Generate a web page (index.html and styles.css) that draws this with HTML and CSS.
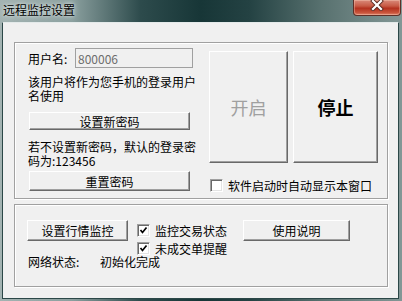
FILE: index.html
```html
<!DOCTYPE html>
<html lang="zh-CN">
<head>
  <meta charset="UTF-8">
  <title>远程监控设置</title>
  <link rel="stylesheet" href="styles.css">
</head>
<body>

  <div class="window">
    <div class="titlebar">
      <span class="title">远程监控设置</span>
      <div class="close">
        <svg width="16" height="11" viewBox="0 0 16 11">
          <path d="M4 1 L12 9 M12 1 L4 9" stroke="#5b2a22" stroke-width="4" stroke-linecap="square"/>
          <path d="M4 1 L12 9 M12 1 L4 9" stroke="#fff" stroke-width="2.2" stroke-linecap="square"/>
        </svg>
      </div>
    </div>

    <div class="client">
      <div class="group group-main">
        <div class="left">
          <div class="field">
            <label>用户名:</label>
            <input class="edit" type="text" value="800006" readonly>
          </div>
          <p class="note">该用户将作为您手机的登录用户<br>名使用</p>
          <button class="btn btn-wide">设置新密码</button>
          <p class="note note-pwd">若不设置新密码，默认的登录密<br>码为:123456</p>
          <button class="btn btn-wide btn-reset">重置密码</button>
        </div>
        <div class="right">
          <div class="big-buttons">
            <button class="btn big big-start" disabled>开启</button>
            <button class="btn big big-stop">停止</button>
          </div>
          <label class="checkrow checkrow-auto"><span class="check"></span>软件启动时自动显示本窗口</label>
        </div>
      </div>

      <div class="group group-monitor">
        <button class="btn btn-market">设置行情监控</button>
        <label class="checkrow"><span class="check checked"><svg width="9" height="9" viewBox="0 0 9 9"><path d="M1.5 4 L3.5 6.5 L7.5 1.5" fill="none" stroke="#000" stroke-width="1.7"/></svg></span>监控交易状态</label>
        <button class="btn btn-help">使用说明</button>
        <label class="checkrow checkrow-order"><span class="check checked"><svg width="9" height="9" viewBox="0 0 9 9"><path d="M1.5 4 L3.5 6.5 L7.5 1.5" fill="none" stroke="#000" stroke-width="1.7"/></svg></span>未成交单提醒</label>
        <div class="status">
          <span class="status-label">网络状态:</span>
          <span>初始化完成</span>
        </div>
      </div>
    </div>
  </div>

</body>
</html>
```

FILE: styles.css
```css
* {
  box-sizing: border-box;
}
body {
  margin: 0;
  font-family: "Noto Sans CJK SC", "Noto Sans", sans-serif;
  font-size: 12px;
  color: #000;
}
.window {
  width: 402px;
  height: 301px;
  display: flex;
  flex-direction: column;
  background: linear-gradient(90deg, #a3b3b2 0%, #8a9f9e 18%, #2d4b4c 35%, #173637 50%, #244243 62%, #58716f 80%, #839796 100%);
}
.titlebar {
  height: 22px;
  display: flex;
  align-items: flex-start;
}
.title {
  padding: 3px 0 0 3px;
  line-height: 14px;
  text-shadow: 0 0 6px #dfe6e6, 0 0 3px #dfe6e6;
}
.close {
  margin-left: auto;
  margin-right: 1px;
  width: 48px;
  height: 16px;
  display: flex;
  justify-content: center;
  align-items: flex-start;
  border: 1px solid #5e2f27;
  border-top: none;
  border-radius: 0 0 4px 4px;
  background: linear-gradient(#d98a7a, #c75a45 40%, #b3321f 55%, #c9553c 85%, #e0866f);
  box-shadow: inset 0 0 0 1px rgba(255, 220, 200, 0.35);
}
.client {
  flex: 1;
  margin: 0 3px 2px 2px;
  padding: 19px 10px 11px 11px;
  display: flex;
  flex-direction: column;
  gap: 5px;
  background: #f0f0f0;
  border: 1px solid #2b4747;
  border-top-color: #e4eaea;
}
.group {
  border: 1px solid #a0a0a0;
  box-shadow: inset 1px 1px 0 #fff, 1px 1px 0 #fff;
}
.group-main {
  height: 157px;
  padding: 5px 0 0 13px;
  display: grid;
  grid-template-columns: 165px 169px;
  column-gap: 16px;
}
.left,
.right {
  display: flex;
  flex-direction: column;
  align-items: flex-start;
}
.field {
  display: flex;
  align-items: center;
  height: 20px;
}
.field label {
  width: 47px;
}
.edit {
  width: 118px;
  height: 20px;
  margin: 0;
  padding: 0 2px;
  border: 1px solid #a0a0a0;
  background: #f0f0f0;
  color: #6d6d6d;
  font: inherit;
  outline: none;
}
.note {
  margin: 7px 0 0;
  line-height: 14px;
  white-space: nowrap;
}
.note-pwd {
  margin-top: 10px;
}
.btn {
  margin: 0;
  padding: 0;
  font: inherit;
  color: #000;
  background: #f0f0f0;
  border: 1px solid;
  border-color: #fff #696969 #696969 #fff;
  box-shadow: inset -1px -1px 0 #a0a0a0;
}
.btn-wide {
  width: 161px;
  height: 18px;
  margin: 9px 0 0 1px;
}
.btn-reset {
  height: 20px;
  margin-top: 3px;
}
.big-buttons {
  display: flex;
  gap: 5px;
  margin-top: 3px;
}
.big {
  height: 112px;
  font-size: 18px;
}
.big-start {
  width: 79px;
  color: #a0a0a0;
}
.big-stop {
  width: 85px;
  font-weight: bold;
}
.checkrow {
  display: flex;
  align-items: center;
  gap: 5px;
  line-height: 13px;
  white-space: nowrap;
}
.checkrow-auto {
  margin: 16px 0 0 1px;
}
.check {
  width: 13px;
  height: 13px;
  display: flex;
  justify-content: center;
  align-items: center;
  background: #fff;
  border: 1px solid;
  border-color: #a0a0a0 #fff #fff #a0a0a0;
  box-shadow: inset 1px 1px 0 #696969, inset -1px -1px 0 #e3e3e3;
}
.group-monitor {
  height: 83px;
  padding: 15px 0 0 12px;
  display: grid;
  grid-template-columns: 110px 106px 107px;
  grid-template-rows: 21px 14px 13px;
  align-items: center;
}
.btn-market {
  width: 101px;
  height: 21px;
}
.btn-help {
  width: 107px;
  height: 21px;
}
.checkrow-order {
  grid-column: 2;
}
.status {
  grid-column: 1 / -1;
  display: flex;
  padding-left: 1px;
  line-height: 13px;
}
.status-label {
  width: 72px;
}
```
